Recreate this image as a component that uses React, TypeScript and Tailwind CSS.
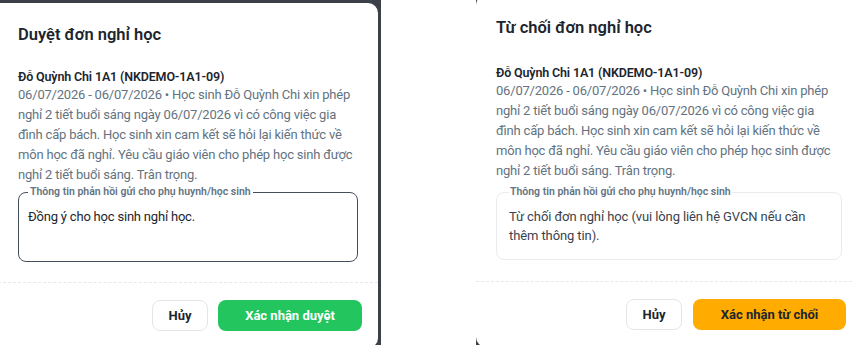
import React from "react";

const descLines = [
  "06/07/2026 - 06/07/2026 • Học sinh Đỗ Quỳnh Chi xin phép",
  "nghỉ 2 tiết buổi sáng ngày 06/07/2026 vì có công việc gia",
  "đình cấp bách. Học sinh xin cam kết sẽ hỏi lại kiến thức về",
  "môn học đã nghỉ. Yêu cầu giáo viên cho phép học sinh được",
  "nghỉ 2 tiết buổi sáng. Trân trọng.",
];

function Desc() {
  return (
    <div className="text-[13px] leading-[20px] tracking-[-0.2px] text-[#637381] whitespace-nowrap">
      {descLines.map((l) => (
        <div key={l}>{l}</div>
      ))}
    </div>
  );
}

export default function App() {
  return (
    <div className="w-[854px] h-[345px] flex bg-white overflow-hidden font-['Roboto',sans-serif]">
      {/* Left dialog */}
      <div className="w-[381px] h-[345px] shrink-0 bg-[#3b4049] pt-[3px] overflow-hidden">
        <div className="w-[380px] -ml-[2px] h-[345px] bg-white rounded-r-[10px] flex flex-col">
          <div className="px-5 pt-[20px]">
            <h2 className="text-[16.5px] leading-[24px] font-semibold text-[#1C252E]">Duyệt đơn nghỉ học</h2>
          </div>
          <div className="px-5 pt-[21px]">
            <div className="text-[12.5px] leading-[17px] tracking-[-0.15px] font-semibold text-[#1C252E]">
              Đỗ Quỳnh Chi 1A1 (NKDEMO-1A1-09)
            </div>
            <Desc />
            <fieldset className="mt-0 border border-[#454F5B] rounded-[8px] pl-[9px] pr-[10px] pt-[8px] pb-[34px]">
              <legend className="px-[2px] text-[10.5px] leading-[14px] font-semibold text-[#637381]">
                Thông tin phản hồi gửi cho phụ huynh/học sinh
              </legend>
              <div className="text-[13px] leading-[20px] tracking-[-0.2px] text-[#1C252E]">
                Đồng ý cho học sinh nghỉ học.
              </div>
            </fieldset>
          </div>
          <div className="mt-[20px] border-t border-dashed border-[#e6e9ec]" />
          <div className="flex justify-end gap-[10px] pr-[16px] pt-[17px]">
            <button className="w-[56px] h-[31px] rounded-[8px] border border-[#e3e6e9] bg-white text-[13px] font-bold text-[#1C252E]">
              Hủy
            </button>
            <button className="w-[144px] h-[31px] rounded-[8px] bg-[#22C55E] text-[13px] font-bold text-white">
              Xác nhận duyệt
            </button>
          </div>
        </div>
      </div>

      <div className="w-[95px] shrink-0" />

      {/* Right dialog */}
      <div className="flex-1 h-[345px] bg-[#3b4049] overflow-hidden">
        <div className="w-[386px] -mt-[5px] h-[352px] bg-white rounded-l-[10px] flex flex-col">
          <div className="px-5 pt-[21px]">
            <h2 className="text-[16.5px] leading-[24px] font-semibold text-[#1C252E]">Từ chối đơn nghỉ học</h2>
          </div>
          <div className="px-5 pt-[25px]">
            <div className="text-[12.5px] leading-[16px] tracking-[-0.15px] font-semibold text-[#1C252E]">
              Đỗ Quỳnh Chi 1A1 (NKDEMO-1A1-09)
            </div>
            <Desc />
            <fieldset className="mt-[4px] border border-[#e9ecee] rounded-[8px] pl-[12px] pr-[12px] pt-[8px] pb-[14px]">
              <legend className="px-[1px] text-[10.5px] leading-[14px] font-semibold text-[#637381]">
                Thông tin phản hồi gửi cho phụ huynh/học sinh
              </legend>
              <div className="text-[13px] leading-[19px] tracking-[-0.1px] text-[#3a434d] whitespace-nowrap">
                Từ chối đơn nghỉ học (vui lòng liên hệ GVCN nếu cần
                <br />
                thêm thông tin).
              </div>
            </fieldset>
          </div>
          <div className="mt-[21px] border-t border-dashed border-[#e6e9ec]" />
          <div className="flex justify-end gap-[11px] pr-[16px] pt-[17px]">
            <button className="w-[56px] h-[31px] rounded-[8px] border border-[#e3e6e9] bg-white text-[13px] font-bold text-[#1C252E]">
              Hủy
            </button>
            <button className="w-[153px] h-[31px] rounded-[8px] bg-[#FFAB00] text-[13px] font-bold text-[#1C252E]">
              Xác nhận từ chối
            </button>
          </div>
        </div>
      </div>
    </div>
  );
}
